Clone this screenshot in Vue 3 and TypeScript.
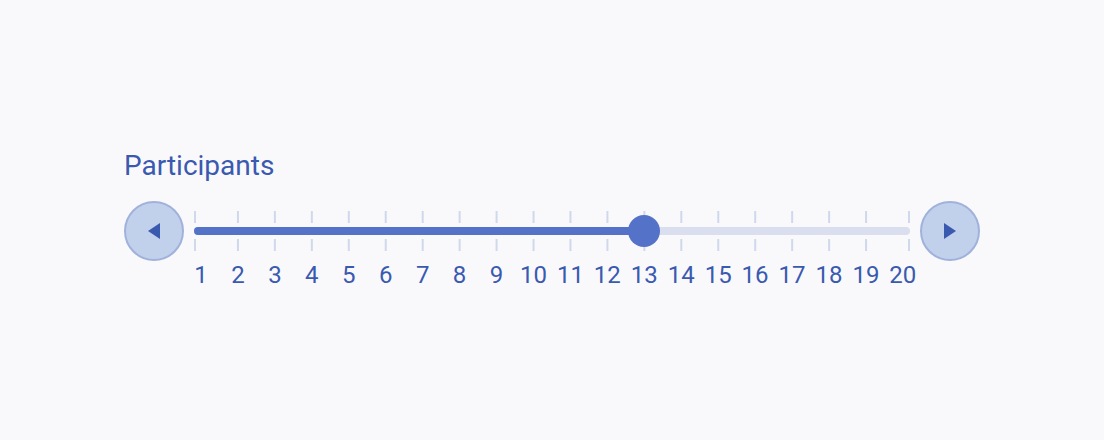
<script setup lang="ts">
import { computed, ref } from 'vue'

const min = 1
const max = 20
const value = ref(13)
const steps = Array.from({ length: max - min + 1 }, (_, i) => min + i)
const ratio = computed(() => (value.value - min) / (max - min))

function tickX(n: number) {
  return `${((n - min) / (max - min)) * 100}%`
}

function step(delta: number) {
  value.value = Math.min(max, Math.max(min, value.value + delta))
}
</script>

<template>
  <main class="page">
    <section class="field">
      <label class="title" for="participants">Participants</label>
      <div class="control">
        <button class="step" type="button" aria-label="Decrease" @click="step(-1)">
          <svg width="12" height="16" viewBox="0 0 12 16" aria-hidden="true"><path d="M12 0v16L0 8z" /></svg>
        </button>
        <div class="slider">
          <svg class="ticks" aria-hidden="true">
            <line v-for="n in steps" :key="n" class="tick" :x1="tickX(n)" :x2="tickX(n)" y1="0" y2="12" />
          </svg>
          <div class="track"><div class="fill" :style="{ '--ratio': ratio }" /></div>
          <svg class="ticks" aria-hidden="true">
            <line v-for="n in steps" :key="n" class="tick" :x1="tickX(n)" :x2="tickX(n)" y1="0" y2="12" />
          </svg>
          <input id="participants" v-model.number="value" class="range" type="range" :min="min" :max="max" />
        </div>
        <button class="step" type="button" aria-label="Increase" @click="step(1)">
          <svg width="12" height="16" viewBox="0 0 12 16" aria-hidden="true"><path d="M0 0v16l12-8z" /></svg>
        </button>
      </div>
      <div class="numbers">
        <span v-for="n in steps" :key="n" class="number">{{ n }}</span>
      </div>
    </section>
  </main>
</template>

<style>
body {
  background: #f9f9fc;
}
</style>

<style scoped>
.page {
  box-sizing: border-box;
  min-height: 100vh;
  padding: 150px 124px 0;
  color: #3a5aaf;
  font-family: Roboto, sans-serif;
}
.title {
  display: block;
  margin-bottom: 19px;
  font-size: 28px;
  line-height: 32px;
}
.control {
  display: flex;
  align-items: center;
  gap: 10px;
}
.step {
  box-sizing: border-box;
  display: flex;
  flex: none;
  align-items: center;
  justify-content: center;
  width: 60px;
  height: 60px;
  padding: 0;
  border: 2px solid #a0b2dc;
  border-radius: 50%;
  background: #c1d0eb;
  cursor: pointer;
}
.step svg {
  display: block;
  fill: #3a5aaf;
}
.slider {
  position: relative;
  display: flex;
  flex: 1;
  flex-direction: column;
  gap: 4px;
}
.ticks {
  display: block;
  width: calc(100% - 14px);
  height: 12px;
  margin: 0 7px;
  overflow: visible;
}
.tick {
  stroke: #d0d8ec;
  stroke-width: 2px;
}
/* The end ticks sit flush with the ends of the track. */
.tick:first-child {
  transform: translateX(-6px);
}
.tick:last-child {
  transform: translateX(6px);
}
.track {
  height: 8px;
  overflow: hidden;
  border-radius: 4px;
  background: #d9dfee;
}
.fill {
  width: calc(7px + (100% - 14px) * var(--ratio));
  height: 100%;
  background: #5472c8;
}
.range {
  position: absolute;
  top: 4px;
  left: -9px;
  width: calc(100% + 18px);
  height: 32px;
  margin: 0;
  appearance: none;
  background: transparent;
  cursor: pointer;
}
.range::-webkit-slider-thumb {
  width: 32px;
  height: 32px;
  border: 0;
  border-radius: 50%;
  appearance: none;
  background: #5472c8;
}
.numbers {
  display: flex;
  justify-content: space-between;
  padding: 0 77px;
  font-size: 24px;
  line-height: 28px;
}
.number {
  display: flex;
  justify-content: center;
  width: 0;
}
</style>
